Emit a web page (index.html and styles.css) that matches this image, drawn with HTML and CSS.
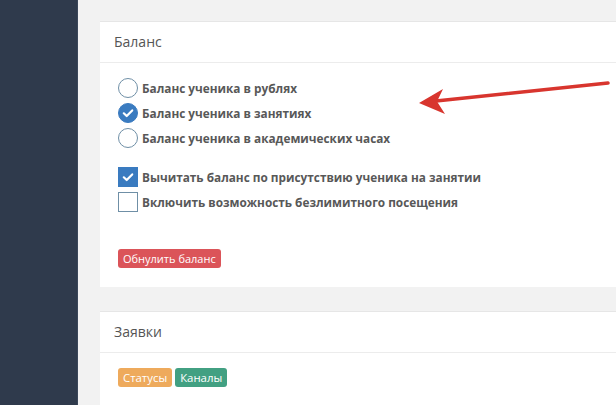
FILE: index.html
```html
<!DOCTYPE html>
<html lang="ru">
<head>
<meta charset="utf-8">
<link rel="stylesheet" href="styles.css">
</head>
<body>
<div class="app">
  <aside class="sidebar"></aside>
  <main class="main">
    <section class="card">
      <div class="card-header">Баланс</div>
      <div class="card-body">
        <div class="group">
          <label class="row"><span class="radio"></span><span class="text">Баланс ученика в рублях</span></label>
          <label class="row"><span class="radio checked"><svg viewBox="0 0 20 20" width="20" height="20"><path d="M5.8 10.3 L8.7 13 L14.2 7.4" fill="none" stroke="#fff" stroke-width="2.2" stroke-linecap="round" stroke-linejoin="round"/></svg></span><span class="text">Баланс ученика в занятиях</span></label>
          <label class="row"><span class="radio"></span><span class="text">Баланс ученика в академических часах</span></label>
        </div>
        <div class="group group-checks">
          <label class="row"><span class="check checked"><svg viewBox="0 0 20 20" width="20" height="20"><path d="M5.8 10.3 L8.7 13 L14.2 7.4" fill="none" stroke="#fff" stroke-width="2.2" stroke-linecap="round" stroke-linejoin="round"/></svg></span><span class="text">Вычитать баланс по присутствию ученика на занятии</span></label>
          <label class="row"><span class="check"></span><span class="text">Включить возможность безлимитного посещения</span></label>
        </div>
        <button class="btn btn-danger">Обнулить баланс</button>
      </div>
    </section>
    <section class="card">
      <div class="card-header">Заявки</div>
      <div class="card-body card-body-tags">
        <span class="tag tag-orange">Статусы</span>
        <span class="tag tag-green">Каналы</span>
      </div>
    </section>
  </main>
</div>
<svg class="arrow" width="616" height="405" viewBox="0 0 616 405">
  <line x1="608" y1="83" x2="436" y2="101" stroke="#d8352e" stroke-width="3.5" stroke-linecap="round"/>
  <path d="M419 103 L443 89 L437 101.5 L445 114 Z" fill="#d8352e"/>
</svg>
</body>
</html>
```
FILE: styles.css
```css
html, body {
  margin: 0;
  padding: 0;
  width: 616px;
  height: 405px;
  overflow: hidden;
  background: #f2f2f2;
  font-family: "Open Sans", "Noto Sans", sans-serif;
  color: #555;
}
.app {
  display: flex;
  height: 405px;
}
.sidebar {
  flex: 0 0 77px;
  background: #2f3a4c;
  border-right: 1px solid #3b475a;
}
.main {
  flex: 1;
  padding: 21px 0 0 22px;
  display: flex;
  flex-direction: column;
  gap: 24px;
  overflow: hidden;
}
.card {
  width: 560px;
  background: #fff;
  border-top: 1px solid #e6e6e6;
  box-sizing: border-box;
}
.card-header {
  height: 40px;
  line-height: 40px;
  padding-left: 14px;
  font-size: 14px;
  color: #555;
  border-bottom: 1px solid #ececec;
}
.card-body {
  padding: 12px 18px 19px;
  display: flex;
  flex-direction: column;
  align-items: flex-start;
}
.group {
  display: flex;
  flex-direction: column;
}
.group-checks {
  margin-top: 14px;
}
.row {
  height: 25px;
  display: flex;
  align-items: center;
  gap: 4px;
}
.text {
  font-size: 11.8px;
  font-weight: 700;
  color: #585858;
}
.radio {
  width: 20px;
  height: 20px;
  border-radius: 50%;
  border: 1.5px solid #6f8fa6;
  box-sizing: border-box;
  display: flex;
  align-items: center;
  justify-content: center;
}
.radio.checked, .check.checked {
  background: #3a7bc0;
  border-color: #3a7bc0;
}
.radio svg, .check svg {
  flex: 0 0 auto;
}
.check {
  width: 20px;
  height: 20px;
  border: 1.5px solid #6f8fa6;
  box-sizing: border-box;
  display: flex;
  align-items: center;
  justify-content: center;
}
.btn {
  margin-top: 35px;
  height: 19px;
  padding: 0 5px;
  border: none;
  border-radius: 3px;
  font-family: "Open Sans", "Noto Sans", sans-serif;
  font-size: 11px;
  line-height: 19px;
  color: #fff;
}
.btn-danger {
  background: #db5459;
}
.card-body-tags {
  flex-direction: row;
  gap: 3px;
  padding-top: 15px;
}
.tag {
  height: 19px;
  line-height: 19px;
  padding: 0 5px;
  border-radius: 3px;
  font-size: 11.4px;
  color: #fff;
}
.tag-orange {
  background: #eeaa5c;
}
.tag-green {
  background: #42a082;
}
.arrow {
  position: absolute;
  left: 0;
  top: 0;
  pointer-events: none;
}
```
